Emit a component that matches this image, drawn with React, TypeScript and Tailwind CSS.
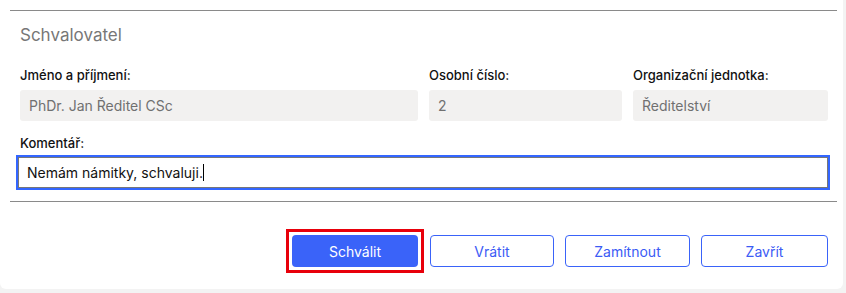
import React from "react";

export default function App() {
  const font = { fontFamily: "Inter, 'Liberation Sans', sans-serif" };
  const outBtn =
    "h-[32px] border border-[#3a63f9] text-[#3b5bf5] rounded-[4px] text-[14px] bg-white";
  return (
    <div className="w-[846px] h-[293px] bg-[#f3f3f3]" style={font}>
      <div className="w-[843px] h-[289px] bg-white rounded-b-[6px] pt-[10px] pl-[10px] pr-[6px]">
        <div className="h-px bg-[#8a8a8a]" />
        <div className="pl-[10px] pt-[13px] text-[17px] leading-[22px] text-[#777]">Schvalovatel</div>
        <div className="grid grid-cols-[398px_193px_195px] gap-x-[11px] mt-[21px] pl-[10px]">
          {[
            ["Jméno a příjmení:", "PhDr. Jan Ředitel CSc"],
            ["Osobní číslo:", "2"],
            ["Organizační jednotka:", "Ředitelství"],
          ].map(([l, v]) => (
            <div key={l}>
              <div className="text-[13px] leading-[16px] font-medium text-[#111]">{l}</div>
              <div className="mt-[7px] h-[31px] bg-[#f2f1f0] rounded-[3px] pl-[9px] flex items-center text-[14px] text-[#707070]">
                {v}
              </div>
            </div>
          ))}
        </div>
        <div className="pl-[10px] mt-[14px] text-[13px] leading-[16px] font-medium text-[#111]">Komentář:</div>
        <div className="ml-[6px] mr-[7px] mt-[4px] h-[35px] border-2 border-[#3366ff]">
          <div className="h-full border border-[#777] flex items-center pl-[8px] text-[14px] text-[#111]">
            Nemám námitky, schvaluji.<span className="inline-block w-px h-[17px] bg-black" />
          </div>
        </div>
        <div className="h-px bg-[#8a8a8a] mt-[11px]" />
        <div className="flex justify-end gap-[11px] pr-[9px] mt-[33px]">
          <div className="relative mr-px">
            <button className="w-[126px] h-[32px] bg-[#3a63f9] text-white rounded-[4px] text-[14px] block">
              Schválit
            </button>
            <span className="absolute -inset-[6px] border-[3px] border-[#e8000b] pointer-events-none" />
          </div>
          <button className={`w-[124px] ${outBtn}`}>Vrátit</button>
          <button className={`w-[125px] ${outBtn}`}>Zamítnout</button>
          <button className={`w-[127px] ${outBtn}`}>Zavřít</button>
        </div>
      </div>
    </div>
  );
}
